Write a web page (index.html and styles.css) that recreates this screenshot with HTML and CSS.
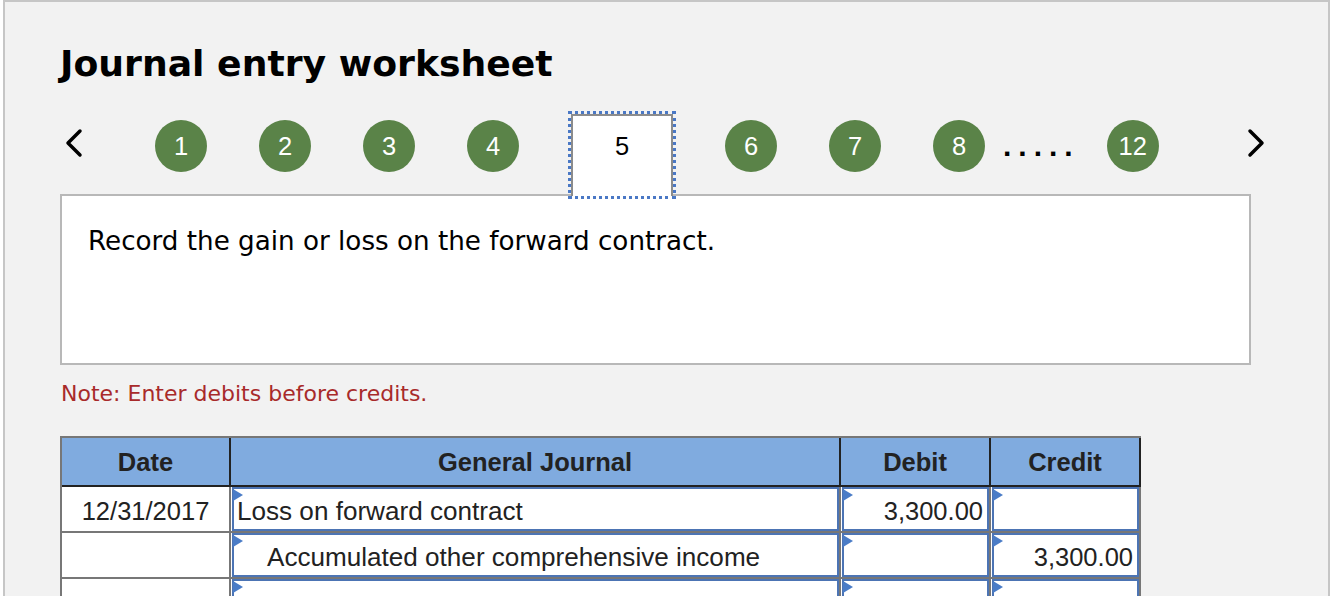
FILE: index.html
```html
<!DOCTYPE html>
<html lang="en">
<head>
  <meta charset="UTF-8" />
  <title>Journal entry worksheet</title>
  <link rel="stylesheet" href="styles.css">
</head>
<body>

<div class="sheet">
  <h1 class="title">Journal entry worksheet</h1>

  <div class="nav">
    <svg class="arrow prev" viewBox="0 0 18 30"><path d="M15 3 L3 15 L15 27" /></svg>
    <div class="steps">
      <span class="step">1</span>
      <span class="step">2</span>
      <span class="step">3</span>
      <span class="step">4</span>
      <span class="step current">5</span>
      <span class="step">6</span>
      <span class="step">7</span>
      <span class="step">8</span>
      <span class="more">.....</span>
      <span class="step">12</span>
    </div>
    <svg class="arrow next" viewBox="0 0 18 30"><path d="M3 3 L15 15 L3 27" /></svg>
  </div>

  <div class="prompt">Record the gain or loss on the forward contract.</div>

  <p class="note">Note: Enter debits before credits.</p>

  <table class="journal">
    <thead>
      <tr>
        <th class="col-date">Date</th>
        <th class="col-account">General Journal</th>
        <th class="col-amount">Debit</th>
        <th class="col-amount">Credit</th>
      </tr>
    </thead>
    <tbody>
      <tr>
        <td class="date">12/31/2017</td>
        <td><div class="field account">Loss on forward contract</div></td>
        <td><div class="field amount">3,300.00</div></td>
        <td><div class="field amount"></div></td>
      </tr>
      <tr>
        <td class="date"></td>
        <td><div class="field account indent">Accumulated other comprehensive income</div></td>
        <td><div class="field amount"></div></td>
        <td><div class="field amount">3,300.00</div></td>
      </tr>
      <tr>
        <td class="date"></td>
        <td><div class="field account"></div></td>
        <td><div class="field amount"></div></td>
        <td><div class="field amount"></div></td>
      </tr>
    </tbody>
  </table>
</div>

</body>
</html>
```

FILE: styles.css
```css
:root {
  --frame: #c6c6c6;
  --panel: #f2f2f2;
  --green: #5a8348;
  --head-blue: #80abdf;
  --field-blue: #4c74b4;
  --flag-blue: #4a7cc7;
  --note-red: #a82a2a;
}

* {
  box-sizing: border-box;
}

body {
  margin: 0;
  background: #fff;
}

.sheet {
  margin: 0 4px 0 3px;
  min-height: 100vh;
  border: 2px solid var(--frame);
  border-bottom: none;
  background: var(--panel);
  padding-left: 55px;
  overflow: hidden;
}

.title {
  margin: 40px 0 0;
  font: bold 36.2px/44px "DejaVu Sans", sans-serif;
  color: #000;
}

/* step navigation */
.nav {
  display: flex;
  align-items: flex-start;
  height: 82px;
  margin: 28px 0 -2px;
}

.arrow {
  flex: none;
  width: 18px;
  height: 30px;
  margin-top: 14px;
}

.arrow path {
  fill: none;
  stroke: #000;
  stroke-width: 3.5;
  stroke-linecap: round;
  stroke-linejoin: round;
}

.prev {
  margin-left: 5px;
}

.next {
  margin-left: 88px;
}

.steps {
  display: flex;
  align-items: flex-start;
  gap: 52px;
  margin-left: 72px;
}

.step {
  width: 52px;
  height: 52px;
  margin-top: 6px;
  border-radius: 50%;
  background: var(--green);
  color: #fff;
  font: 25.5px/52px "Liberation Sans", Arial, sans-serif;
  text-align: center;
}

.step.current {
  position: relative;
  width: 102px;
  height: 82px;
  margin-top: 0;
  padding-top: 4px;
  border: 2px solid #8c8c8c;
  border-bottom: none;
  border-radius: 0;
  outline: 3px dotted #4a78c5;
  background: #fff;
  color: #000;
}

.more {
  margin: 6px -25px 0 -34px;
  font: bold 30px/52px "Liberation Sans", Arial, sans-serif;
  letter-spacing: 7px;
  color: #000;
}

/* question */
.prompt {
  width: 1191px;
  height: 171px;
  padding: 30px 26px 0;
  border: 2px solid #b8b8b8;
  background: #fff;
  font: 26.2px/30px "DejaVu Sans", sans-serif;
  color: #000;
}

.note {
  margin: 16px 0 0;
  padding-left: 1px;
  font: 22px/26px "DejaVu Sans", sans-serif;
  color: var(--note-red);
}

/* journal table */
.journal {
  margin-top: 29px;
  border-collapse: separate;
  border-spacing: 0;
  border-top: 2px solid #777;
  border-left: 2px solid #777;
  table-layout: fixed;
  font-family: "Liberation Sans", Arial, sans-serif;
  font-size: 25.5px;
  color: #222;
}

.journal th {
  box-sizing: content-box;
  height: 45px;
  padding: 2px 0 0;
  background: var(--head-blue);
  border-right: 2px solid #222;
  border-bottom: 2px solid #222;
  font-weight: bold;
  text-align: center;
}

.col-date { width: 167px; }
.col-account { width: 608px; }
.col-amount { width: 148px; }

.journal td {
  box-sizing: content-box;
  height: 44px;
  padding: 0;
  border-right: 2px solid #777;
  border-bottom: 2px solid #777;
  background: #fff;
}

.journal td.date {
  height: 40px;
  padding-top: 4px;
  text-align: center;
  line-height: 40px;
}

.field {
  position: relative;
  height: 44px;
  margin-left: 1px;
  padding: 4px 3px 0;
  border: 2px solid var(--field-blue);
  background: #fff;
  line-height: 36px;
  white-space: nowrap;
}

.field::before {
  content: "";
  position: absolute;
  left: -1px;
  top: 0;
  border-left: 10px solid var(--flag-blue);
  border-top: 6px solid transparent;
  border-bottom: 6px solid transparent;
}

.field.account {
  font-size: 26.1px;
}

.field.indent {
  padding-left: 33px;
}

.field.amount {
  padding-right: 4px;
  text-align: right;
}
```
